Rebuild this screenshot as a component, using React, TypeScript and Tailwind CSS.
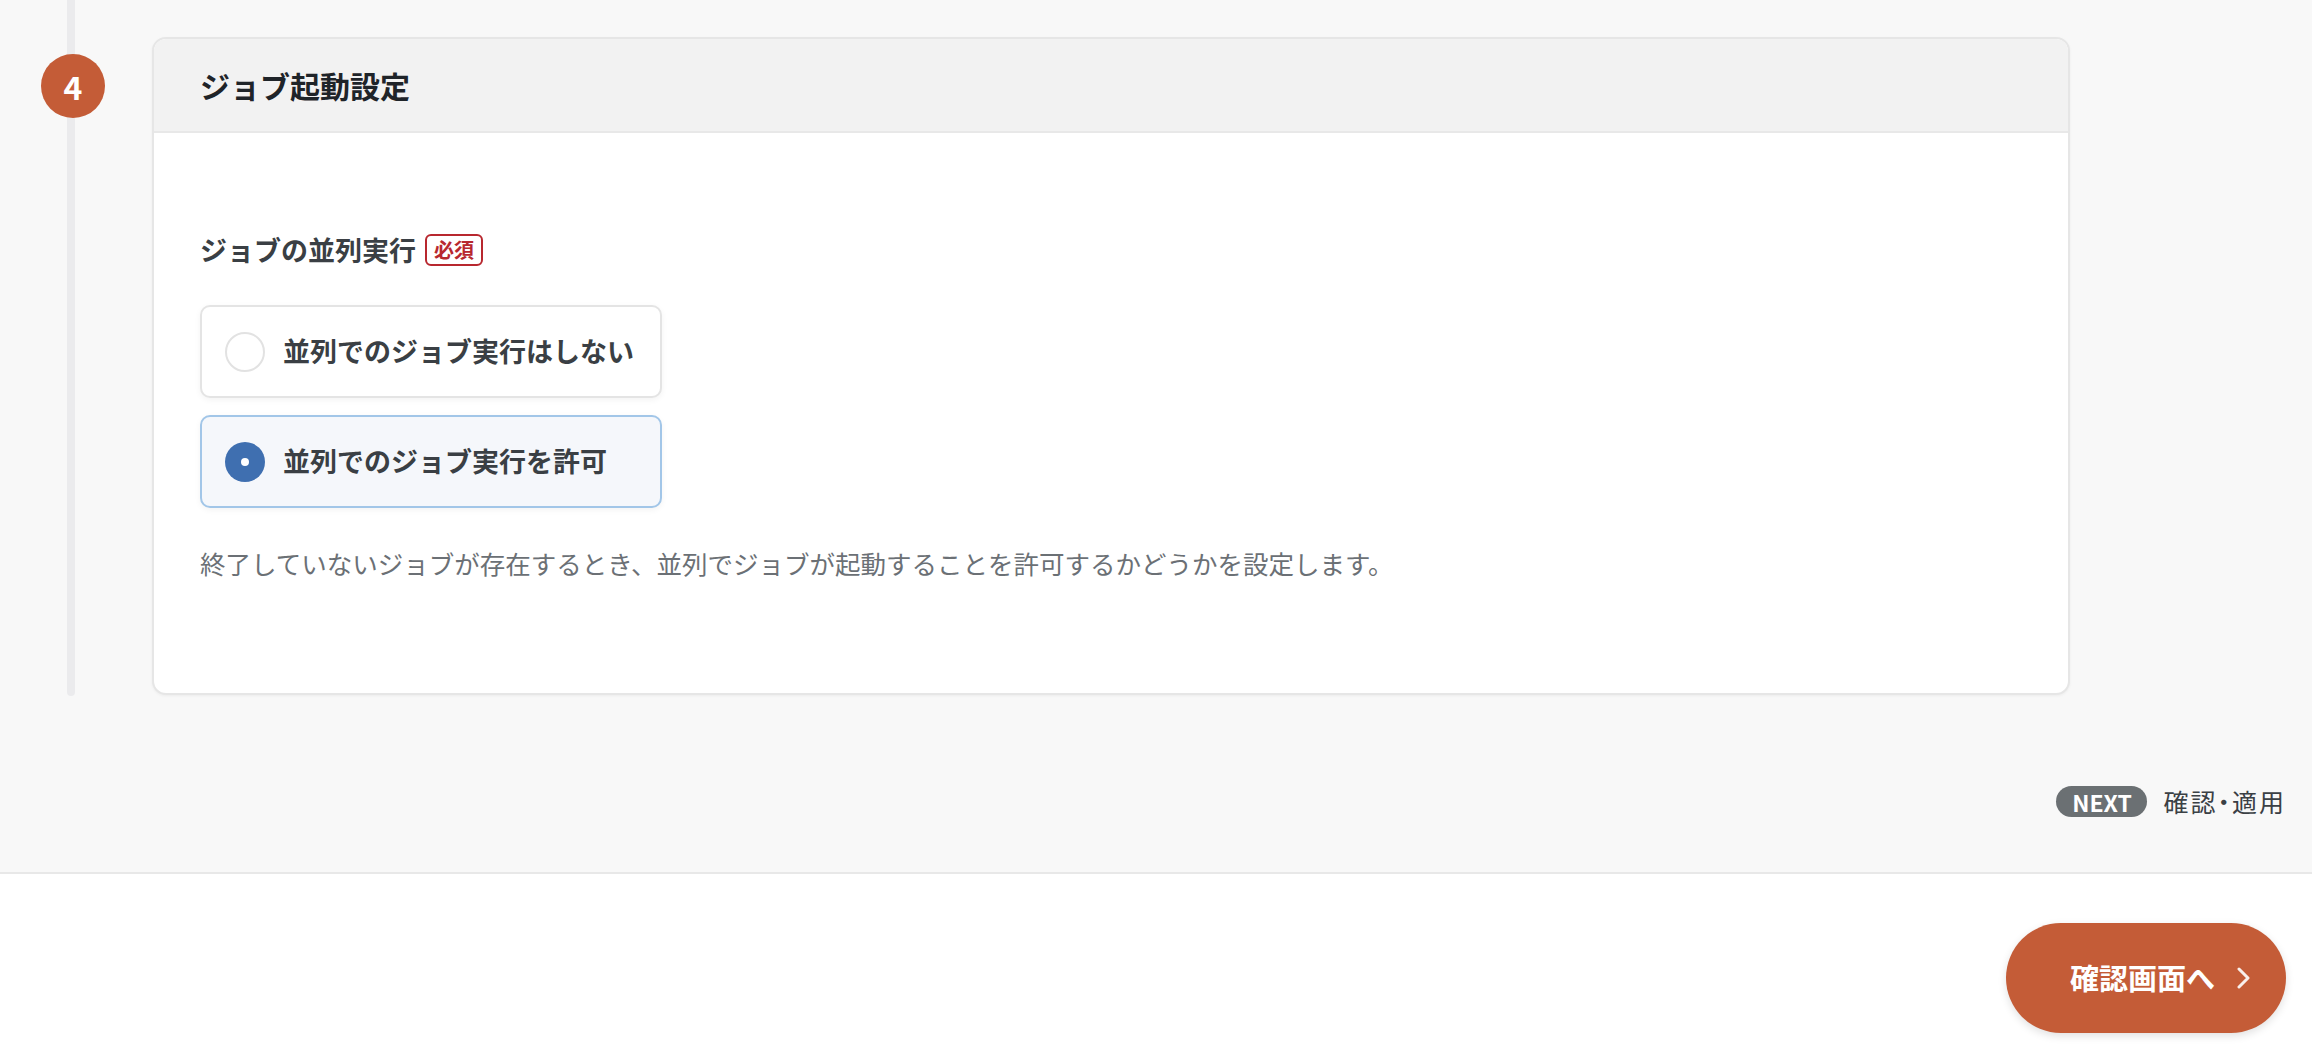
import { useState } from 'react';

const OPTIONS = [
  { id: 'deny', label: '並列でのジョブ実行はしない' },
  { id: 'allow', label: '並列でのジョブ実行を許可' },
];

const App = () => {
  const [selected, setSelected] = useState('allow');

  return (
    <div className="min-h-screen w-full bg-white font-['Noto_Sans_CJK_JP','Noto_Sans',sans-serif]">
      {/* Form area */}
      <div className="h-[874px] bg-[#f8f8f8] border-b-2 border-[#e8e8e8] flex flex-col">
        <div className="flex">
          {/* Step rail */}
          <div className="relative w-[152px] shrink-0">
            <div className="absolute left-[67px] top-0 bottom-[-1px] w-2 rounded-b-full bg-[#ebebed]" />
            <div className="absolute left-[41px] top-[54px] w-16 h-16 rounded-full bg-[#c45c37] flex items-center justify-center text-white text-[32px] font-bold">
              4
            </div>
          </div>

          {/* Card */}
          <div className="w-[1918px] mt-[37px] rounded-[14px] border-2 border-[#e6e6e6] bg-white overflow-hidden shadow-[0_1px_3px_rgba(0,0,0,0.05)]">
            <div className="h-[94px] bg-[#f2f2f2] border-b-2 border-[#e8e8e8] flex items-center px-[46px]">
              <h2 className="text-[30px] font-bold text-[#1f2429]">ジョブ起動設定</h2>
            </div>

            <div className="pl-[46px] pt-[97px] pb-[112px]">
              <div className="flex items-center gap-[9px] h-[40px]">
                <span className="text-[27px] font-bold text-[#3a3f44]">ジョブの並列実行</span>
                <span className="h-[32px] px-[7px] rounded-[6px] border-2 border-[#b8282f] text-[#b8282f] text-[20px] font-bold flex items-center">
                  必須
                </span>
              </div>

              <div className="mt-[35px] flex flex-col gap-[17px]">
                {OPTIONS.map(option => {
                  const active = selected === option.id;
                  return (
                    <button
                      key={option.id}
                      onClick={() => setSelected(option.id)}
                      className={
                        active
                          ? 'w-[462px] h-[93px] rounded-[10px] border-2 border-[#a2c6e8] bg-[#f5f7fb] flex items-center gap-[18px] pl-[23px] text-left shadow-[0_2px_6px_rgba(0,0,0,0.05)]'
                          : 'w-[462px] h-[93px] rounded-[10px] border-2 border-[#e4e4e4] bg-white flex items-center gap-[18px] pl-[23px] text-left shadow-[0_2px_6px_rgba(0,0,0,0.05)]'
                      }
                    >
                      {active ? (
                        <span className="w-10 h-10 rounded-full bg-[#3f6fb0] flex items-center justify-center shrink-0">
                          <span className="w-2 h-2 rounded-full bg-white" />
                        </span>
                      ) : (
                        <span className="w-10 h-10 rounded-full border-2 border-[#e2e2e2] bg-white shrink-0" />
                      )}
                      <span className="text-[27px] font-bold text-[#3a3f44]">{option.label}</span>
                    </button>
                  );
                })}
              </div>

              <p className="mt-[37px] text-[25.5px] leading-[36px] text-[#6b7075]">
                終了していないジョブが存在するとき、並列でジョブが起動することを許可するかどうかを設定します。
              </p>
            </div>
          </div>
        </div>

        {/* Next step hint */}
        <div className="mt-[88px] flex items-center justify-end gap-[16px] pr-[26px]">
          <span className="h-[31px] w-[91px] rounded-full bg-[#6b7073] text-white text-[23px] font-bold flex items-center justify-center">
            NEXT
          </span>
          <span className="text-[25px] tracking-[2px] text-[#3b4045] [font-feature-settings:'palt']">確認・適用</span>
        </div>
      </div>

      {/* Footer */}
      <div className="flex justify-end pr-[26px] pt-[49px]">
        <button className="h-[110px] w-[280px] rounded-full bg-[#c45c37] flex items-center pl-[64px] gap-[22px] text-white shadow-[0_3px_8px_rgba(0,0,0,0.12)]">
          <span className="text-[29px] font-bold">確認画面へ</span>
          <svg width="14" height="22" viewBox="0 0 14 22" fill="none">
            <polyline points="2,2 11,11 2,20" stroke="white" strokeOpacity="0.9" strokeWidth="3" strokeLinecap="round" strokeLinejoin="round" />
          </svg>
        </button>
      </div>
    </div>
  );
};

export default App;
